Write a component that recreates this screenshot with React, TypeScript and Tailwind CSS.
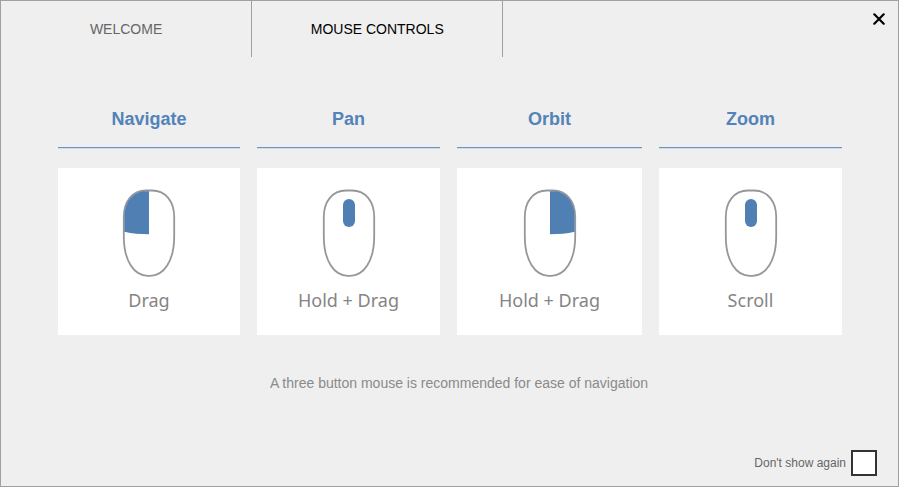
import React, { useState } from "react";

type Highlight = "left" | "wheel" | "right";

interface MouseControl {
  title: string;
  action: string;
  highlight: Highlight;
}

const tabs = ["WELCOME", "MOUSE CONTROLS"];

const controls: MouseControl[] = [
  { title: "Navigate", action: "Drag", highlight: "left" },
  { title: "Pan", action: "Hold + Drag", highlight: "wheel" },
  { title: "Orbit", action: "Hold + Drag", highlight: "right" },
  { title: "Zoom", action: "Scroll", highlight: "wheel" },
];

const MouseIcon = ({ highlight }: { highlight: Highlight }) => (
  <svg width="54" height="88" viewBox="0 0 54 88" fill="none" aria-hidden="true">
    <path
      d="M24 1.5H30C44 1.5 52.2 13 52.2 28V47C52.2 72 42 86.8 28 86.8H26C12 86.8 1.8 72 1.8 47V28C1.8 13 10 1.5 24 1.5Z"
      stroke="#97979b"
      strokeWidth="1.8"
    />
    {highlight === "left" && (
      <path d="M27 2.2H24C10.5 2.2 2.4 13 2.4 28V42.8C10 44.6 18 45.2 27 45.2Z" fill="#4f7fb3" />
    )}
    {highlight === "right" && (
      <path d="M27 2.2H30C43.5 2.2 51.6 13 51.6 28V42.8C44 44.6 36 45.2 27 45.2Z" fill="#4f7fb3" />
    )}
    {highlight === "wheel" && (
      <rect x="21" y="10" width="12" height="28" rx="6" fill="#4f7fb3" />
    )}
  </svg>
);

const ControlCard = ({ title, action, highlight }: MouseControl) => (
  <section className="flex flex-col">
    <h2 className="pb-4 text-center text-lg leading-6 font-bold text-[#5383b8]">{title}</h2>
    <div className="h-0.5 border-t border-[#6c94c2] bg-[#d3dde9]" />
    <div className="mt-[19px] flex flex-col items-center bg-white pt-[21px] pb-5">
      <MouseIcon highlight={highlight} />
      <p className="mt-2 font-['Noto_Sans',sans-serif] text-lg leading-[30px] text-[#858585]">
        {action}
      </p>
    </div>
  </section>
);

const App = () => {
  const [activeTab, setActiveTab] = useState<string>("MOUSE CONTROLS");
  const [hideNextTime, setHideNextTime] = useState<boolean>(false);

  return (
    <div className="flex min-h-screen flex-col border border-[#a0a0a0] bg-[#efefef] font-['Liberation_Sans',Arial,sans-serif]">
      <header className="flex items-start justify-between">
        <nav className="flex w-[56%]">
          {tabs.map((tab) => (
            <button
              key={tab}
              type="button"
              onClick={() => setActiveTab(tab)}
              className={`h-14 flex-1 border-r border-[#a0a0a0] text-sm ${
                activeTab === tab ? "text-black" : "text-[#666666]"
              }`}
            >
              {tab}
            </button>
          ))}
        </nav>
        <button type="button" aria-label="Close" className="mt-[11px] mr-3 p-px">
          <svg width="12" height="12" viewBox="0 0 12 12" aria-hidden="true">
            <path d="M1.3 1.3L10.7 10.7M10.7 1.3L1.3 10.7" stroke="#000" strokeWidth="2.2" strokeLinecap="round" />
          </svg>
        </button>
      </header>

      <main className="flex-1 pt-[50px] pr-14 pl-[57px]">
        <div className="grid grid-cols-[182fr_183fr_185fr_183fr] gap-[17px]">
          {controls.map((control) => (
            <ControlCard key={control.title} {...control} />
          ))}
        </div>
        <p className="mt-[38px] pl-[18px] text-center text-sm text-[#8a8a8a]">
          A three button mouse is recommended for ease of navigation
        </p>
      </main>

      <footer className="flex justify-end pr-[21px] pb-2.5">
        <label className="flex items-center gap-[5px] text-xs text-[#666666]">
          Don't show again
          <input
            type="checkbox"
            checked={hideNextTime}
            onChange={(e) => setHideNextTime(e.target.checked)}
            className="size-[26px] appearance-none border-2 border-[#333333] bg-white checked:bg-[#4f7fb3]"
          />
        </label>
      </footer>
    </div>
  );
};

export default App;
